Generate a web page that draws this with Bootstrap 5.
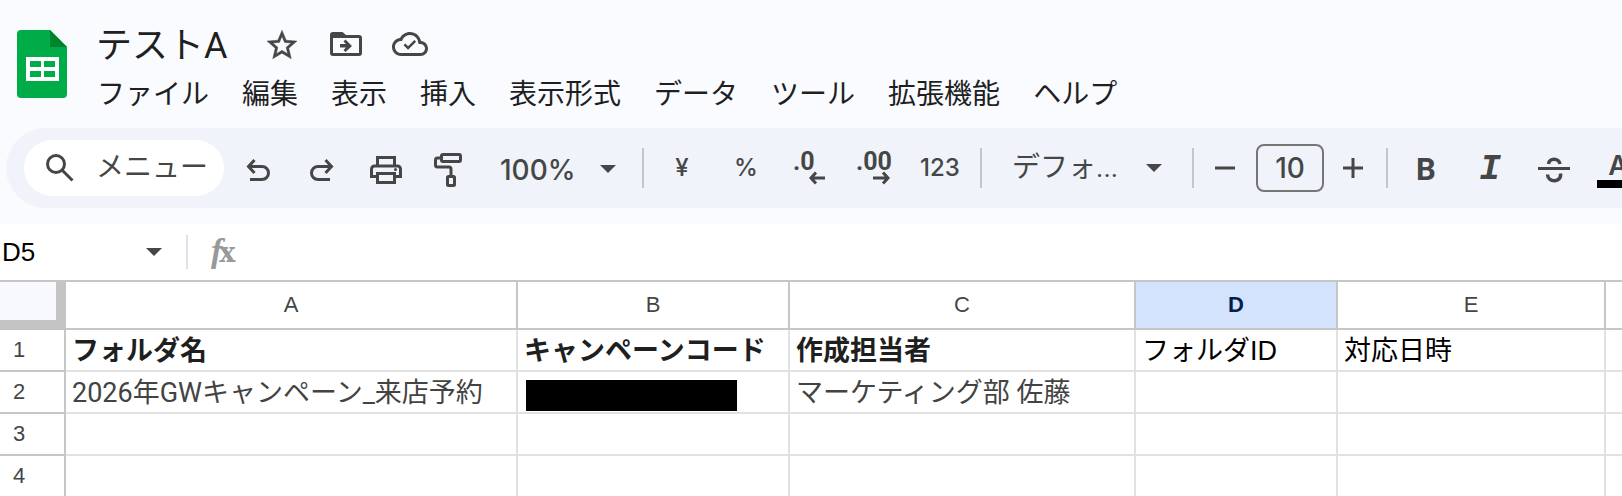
<!DOCTYPE html>
<html lang="ja">
<head>
<meta charset="utf-8">
<meta name="viewport" content="width=device-width, initial-scale=1">
<title>テストA</title>
<link href="https://cdn.jsdelivr.net/npm/bootstrap@5.3.0/dist/css/bootstrap.min.css" rel="stylesheet">
<style>
  :root { --ink: #1f1f1f; --tool: #444746; --line: #c4c7c5; --grid: #e1e1e1; }
  body { background: #f9fbff; color: var(--ink); font-family: Roboto, "Noto Sans CJK JP", sans-serif; }
  svg { display: block; flex: none; }
  .app-head { height: 128px; padding: 20px 0 0 17px; }
  .app-logo { margin: 10px 29px 0 0; }
  .doc-title { width: 154px; height: 46px; padding: 0 0 2px; border: 0; background: none; color: var(--ink); font-size: 36px; line-height: 44px; }
  .menu-list { gap: 33px; padding-left: 1px; margin-top: 9px; }
  .menu-list a { color: var(--ink); font-size: 28px; line-height: 40px; text-decoration: none; white-space: nowrap; }
  .tool { display: flex; align-items: center; justify-content: center; flex: none; width: 64px; height: 56px; padding: 0; border: 0; background: none; color: var(--tool); font: 500 24px/1 Inter, Roboto, sans-serif; }
  .title-row .tool { height: 46px; padding-top: 2px; }
  .tool-bar { height: 80px; margin: 0 0 16px 6px; padding-left: 18px; background: #f0f3fa; border-radius: 40px 0 0 40px; }
  .menu-search { width: 200px; height: 56px; margin-right: 2px; padding-left: 22px; border-radius: 28px; flex: none; color: var(--tool); }
  .menu-search input { width: 124px; margin-left: 22px; padding: 0; border: 0; background: none; font-size: 28px; color: var(--tool); }
  .menu-search input::placeholder { color: var(--tool); opacity: 1; }
  .rule { flex: none; width: 2px; height: 40px; margin: 0 6px; background: var(--line); }
  .pick { flex: none; border: 0; background-color: transparent; background-repeat: no-repeat; background-size: 16px 8px; color: var(--tool); appearance: none;
    background-image: url("data:image/svg+xml,%3Csvg xmlns='http://www.w3.org/2000/svg' viewBox='0 0 16 8'%3E%3Cpath fill='%23444746' d='M0 0h16L8 8z'/%3E%3C/svg%3E"); }
  .pick-zoom { width: 154px; height: 56px; padding: 4px 0 0 18px; background-position: 118px 25px; font: 500 28px/1 Inter, sans-serif; }
  .pick-font { width: 198px; height: 56px; padding: 0 0 0 24px; background-position: 158px 24px; font-size: 28px; }
  .size-box { flex: none; width: 68px; height: 48px; margin: 0 6px; padding: 0; border: 2px solid #747775; border-radius: 8px; background: none; color: var(--tool); text-align: center; font: 500 28px/1 Inter, sans-serif; }
  .step { width: 50px; }
  .glyph-b { padding-top: 2px; font: 700 31px/1 Roboto, sans-serif; }
  .glyph-i { padding-top: 4px; font: italic 700 36px/1 "Liberation Mono", monospace; }
  .low { padding-top: 4px; }
  .formula { height: 56px; background: #fff; }
  .name-box { width: 140px; padding: 0 0 0 2px; border: 0; color: #000; font: 26px/1 "Liberation Sans", sans-serif; }
  .name-open { width: 28px; height: 40px; }
  .formula .rule { height: 34px; margin: 0 0 0 18px; background: #dde3ea; }
  .fx { width: 60px; padding: 0 0 2px 23px; color: #999; font: 700 27px/1 "DejaVu Serif", serif; white-space: nowrap; }
  .fx i { margin-right: -3px; font: italic 700 34px/1 "Liberation Serif", serif; }
  .formula-text { border: 0; background: none; font-size: 27px; outline: 0; }
  .sheet { width: 100%; table-layout: fixed; border-collapse: separate; border-spacing: 0; border-top: 2px solid var(--line); background: #fff; font-size: 27px; line-height: 38px; }
  .sheet th, .sheet td { height: 42px; padding: 0 6px; border-right: 2px solid var(--grid); border-bottom: 2px solid var(--grid); white-space: nowrap; overflow: hidden; }
  .sheet td { padding-top: 2px; }
  .sheet th { border-color: var(--line); color: var(--tool); font: 22px/40px "Liberation Sans", sans-serif; text-align: center; }
  .sheet thead th { height: 48px; }
  .sheet tbody th { padding: 0 26px 0 0; }
  .sheet th:last-child, .sheet td:last-child { border-right: 0; }
  .sheet th.is-active { background: #d3e3fd; color: #041e49; font-weight: 700; }
  .sheet .corner { background: #f8f9fc; border-right: 10px solid #c4c4c4; border-bottom: 10px solid #c4c4c4; }
  .sheet td { color: #000; }
  .sheet .strong-row { color: var(--ink); font-weight: 700; }
  .sheet .muted-row { color: #434343; }
  .arial { font-family: "Liberation Sans", "Noto Sans CJK JP", sans-serif; }
  .redacted { width: 211px; height: 31px; margin: 6px 0 0 2px; background: #000; }
  .c-num { width: 66px; } .c-a { width: 452px; } .c-b { width: 272px; } .c-c { width: 346px; } .c-d { width: 202px; } .c-e { width: 268px; }
</style>
</head>
<body class="vh-100 overflow-hidden">
<header class="app-head d-flex align-items-start">
  <svg class="app-logo" width="50" height="68" viewBox="0 0 50 68" aria-hidden="true">
    <path fill="#00ac47" d="M4 0H33L50 17V64a4 4 0 0 1-4 4H4a4 4 0 0 1-4-4V4a4 4 0 0 1 4-4z"/>
    <path fill="#00832d" d="M33 0L50 17H33z"/>
    <path fill="#fff" fill-rule="evenodd" d="M9 27H42V51H9zM13 31V37H24V31zM27 31V37H38V31zM13 41V47H24V41zM27 41V47H38V41z"/>
  </svg>
  <div class="flex-grow-1">
    <div class="title-row d-flex align-items-center">
      <input class="doc-title" type="text" value="テストA" aria-label="名前を変更">
      <button class="tool" type="button" aria-label="スターを付ける"><svg width="30" height="29" viewBox="2 2 20 19" fill="currentColor" stroke="currentColor" stroke-width=".3"><path d="M22 9.24l-7.19-.62L12 2 9.19 8.63 2 9.24l5.46 4.73L5.82 21 12 17.27 18.18 21l-1.63-7.03L22 9.24zM12 15.4l-3.76 2.27 1-4.28-3.32-2.88 4.38-.38L12 6.1l1.71 4.04 4.38.38-3.32 2.88 1 4.28L12 15.4z"/></svg></button>
      <button class="tool" type="button" aria-label="移動"><svg width="32" height="24" viewBox="0 0 32 24" fill="currentColor"><path fill-rule="evenodd" d="M3 0H12.500L16 3H29a3 3 0 0 1 3 3V21a3 3 0 0 1-3 3H3a3 3 0 0 1-3-3V3a3 3 0 0 1 3-3zM3 6V21H29V6z"/><path d="M10 12H16L13.500 9.500 15.500 7.500 22 14 15.500 20 13.500 18 16 15.500H10z"/></svg></button>
      <button class="tool" type="button" aria-label="ドキュメントのステータス"><svg width="36" height="24" viewBox="0 4 24 16" fill="currentColor"><path d="M19.35 10.04C18.67 6.59 15.64 4 12 4 9.11 4 6.6 5.64 5.35 8.04 2.34 8.36 0 10.91 0 14c0 3.310 2.690 6 6 6h13c2.760 0 5-2.240 5-5 0-2.640-2.050-4.780-4.650-4.960zM19 18H6c-2.210 0-4-1.790-4-4 0-2.050 1.530-3.760 3.560-3.970l1.070-.110.5-.95C8.080 7.140 9.940 6 12 6c2.620 0 4.880 1.860 5.390 4.430l.3 1.500 1.530.110c1.560.1 2.780 1.410 2.780 2.960 0 1.650-1.350 3-3 3z"/><path d="M10.700 15.900L7.700 12.900 8.900 11.700 10.700 13.500 14.900 9.300 16.100 10.500z"/></svg></button>
    </div>
    <nav aria-label="メニュー">
      <ul class="menu-list list-unstyled d-flex mb-0">
        <li><a href="#">ファイル</a></li><li><a href="#">編集</a></li><li><a href="#">表示</a></li><li><a href="#">挿入</a></li><li><a href="#">表示形式</a></li><li><a href="#">データ</a></li><li><a href="#">ツール</a></li><li><a href="#">拡張機能</a></li><li><a href="#">ヘルプ</a></li>
      </ul>
    </nav>
  </div>
</header>

<div class="tool-bar d-flex align-items-center overflow-hidden" role="toolbar" aria-label="ツールバー">
  <label class="menu-search d-flex align-items-center bg-white">
    <svg width="28" height="28" viewBox="0 0 28 28" fill="none" stroke="currentColor" stroke-width="3"><circle cx="10" cy="10" r="8.500"/><path d="M16 16L26.500 26.500"/></svg>
    <input type="text" placeholder="メニュー" aria-label="メニューを検索">
  </label>
  <button class="tool low" type="button" aria-label="元に戻す"><svg width="24" height="28" viewBox="0 0 24 28" fill="none" stroke="currentColor" stroke-width="3"><path d="M8.500 4L2.500 10.500 8.500 17M2.500 10.500H16a6.500 6.500 0 0 1 0 13H4"/></svg></button>
  <button class="tool low" type="button" aria-label="やり直し"><svg width="24" height="28" viewBox="0 0 24 28" fill="none" stroke="currentColor" stroke-width="3"><path d="M15.500 4L21.500 10.500 15.500 17M21.500 10.500H8a6.500 6.500 0 0 0 0 13H20"/></svg></button>
  <button class="tool low" type="button" aria-label="印刷"><svg width="32" height="28" viewBox="0 0 32 28" fill="none" stroke="currentColor" stroke-width="3"><path d="M7.500 10V1.500H24.500V10M7.500 20.500H1.500V13a3 3 0 0 1 3-3H27.500a3 3 0 0 1 3 3V20.500H24.500M7.500 17.500H24.500V26.500H7.500z"/><circle cx="25.500" cy="13.500" r="1.500" fill="currentColor" stroke="none"/></svg></button>
  <button class="tool low" type="button" aria-label="書式を貼り付け"><svg width="32" height="34" viewBox="0 0 32 34" fill="none" stroke="currentColor" stroke-width="3"><rect x="7.500" y="1.500" width="19" height="7" rx="1.500"/><path d="M7 5H3.500a2 2 0 0 0-2 2V12a2 2 0 0 0 2 2H15a2 2 0 0 1 2 2V22"/><rect x="13.500" y="23.500" width="7" height="9" rx="1"/></svg></button>
  <select class="pick pick-zoom" aria-label="ズーム"><option>100%</option></select>
  <span class="rule"></span>
  <button class="tool" type="button" aria-label="通貨の表示形式">¥</button>
  <button class="tool" type="button" aria-label="パーセント表示形式">%</button>
  <button class="tool" type="button" aria-label="小数点以下の桁数を減らす"><svg width="36" height="40" viewBox="-1 -2 36 40"><text x="0" y="20" font-family="Roboto" font-weight="700" font-size="25" fill="currentColor">.0</text><path d="M23 22.500L18 28 23 33.500M18 28H32" fill="none" stroke="currentColor" stroke-width="3"/></svg></button>
  <button class="tool" type="button" aria-label="小数点以下の桁数を増やす"><svg width="38" height="40" viewBox="-1 -2 38 40"><text x="0" y="20" font-family="Roboto" font-weight="700" font-size="25" fill="currentColor">.00</text><path d="M27 22.500L32 28 27 33.500M32 28H17" fill="none" stroke="currentColor" stroke-width="3"/></svg></button>
  <button class="tool ps-1 me-1" type="button" aria-label="表示形式の詳細設定">123</button>
  <span class="rule"></span>
  <select class="pick pick-font" aria-label="フォント"><option>デフォ...</option></select>
  <span class="rule"></span>
  <button class="tool step" type="button" aria-label="フォントサイズを縮小"><svg width="20" height="20" viewBox="0 0 20 20"><path d="M0 10H20" stroke="currentColor" stroke-width="3"/></svg></button>
  <input class="size-box" type="text" value="10" aria-label="フォントサイズ">
  <button class="tool step" type="button" aria-label="フォントサイズを拡大"><svg width="24" height="20" viewBox="0 0 24 20"><path d="M0 10H20M10 0V20" stroke="currentColor" stroke-width="3"/></svg></button>
  <span class="rule"></span>
  <button class="tool glyph-b" type="button" aria-label="太字">B</button>
  <button class="tool glyph-i" type="button" aria-label="斜体">I</button>
  <button class="tool low" type="button" aria-label="取り消し線"><svg width="32" height="28" viewBox="0 0 32 28" fill="none" stroke="currentColor" stroke-width="3"><path d="M0 12.500H32"/><path d="M10.500 8C11 1.500 21 1.500 22 8M9.500 18.500C10 27.500 24 26.500 22.500 17.500" stroke-width="3.500"/></svg></button>
  <button class="tool" type="button" aria-label="テキストの色"><svg width="42" height="48" viewBox="0 0 42 48"><text x="21" y="31" text-anchor="middle" font-family="Inter" font-weight="600" font-size="27" fill="currentColor">A</text><path d="M0 36H42V44H0z" fill="#000"/></svg></button>
</div>

<div class="formula d-flex align-items-center">
  <input class="name-box" type="text" value="D5" aria-label="名前ボックス">
  <button class="tool name-open" type="button" aria-label="名前付き範囲"><svg width="16" height="8" viewBox="0 0 16 8"><path d="M0 0H16L8 8z" fill="currentColor"/></svg></button>
  <span class="rule"></span>
  <label class="fx" for="formula-text"><i>f</i>x</label>
  <input class="formula-text flex-grow-1" id="formula-text" type="text">
</div>

<table class="sheet">
  <colgroup><col class="c-num"><col class="c-a"><col class="c-b"><col class="c-c"><col class="c-d"><col class="c-e"><col></colgroup>
  <thead>
    <tr><th class="corner"></th><th scope="col">A</th><th scope="col">B</th><th scope="col">C</th><th class="is-active" scope="col">D</th><th scope="col">E</th><th scope="col"></th></tr>
  </thead>
  <tbody>
    <tr><th scope="row">1</th><td class="strong-row">フォルダ名</td><td class="strong-row">キャンペーンコード</td><td class="strong-row">作成担当者</td><td class="arial">フォルダID</td><td>対応日時</td><td></td></tr>
    <tr><th scope="row">2</th><td class="muted-row">2026年GWキャンペーン_来店予約</td><td class="align-top"><div class="redacted"></div></td><td class="muted-row">マーケティング部 佐藤</td><td></td><td></td><td></td></tr>
    <tr><th scope="row">3</th><td></td><td></td><td></td><td></td><td></td><td></td></tr>
    <tr><th scope="row">4</th><td></td><td></td><td></td><td></td><td></td><td></td></tr>
  </tbody>
</table>
<script src="https://cdn.jsdelivr.net/npm/bootstrap@5.3.0/dist/js/bootstrap.bundle.min.js"></script>
</body>
</html>
